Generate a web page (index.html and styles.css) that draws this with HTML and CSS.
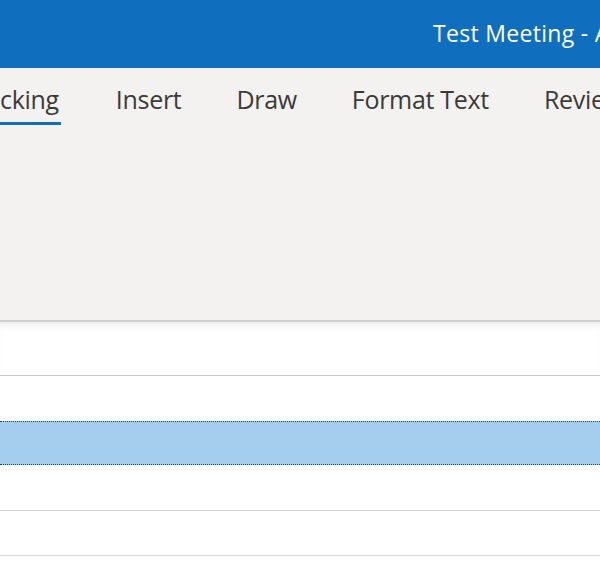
FILE: index.html
```html
<!DOCTYPE html>
<html>
<head>
<meta charset="utf-8">
<link rel="stylesheet" href="styles.css">
</head>
<body>
<div class="titlebar">
  <span class="title">Test Meeting - Appointment</span>
</div>
<div class="ribbon">
  <div class="tabs">
    <span class="tab tab-active">Tracking</span>
    <span class="tab">Insert</span>
    <span class="tab">Draw</span>
    <span class="tab">Format Text</span>
    <span class="tab">Review</span>
  </div>
</div>
<div class="rows">
  <div class="row row-first"></div>
  <div class="row row-plain"></div>
  <div class="row row-selected"></div>
  <div class="row row-after"></div>
  <div class="row row-last"></div>
</div>
</body>
</html>
```
FILE: styles.css
```css
html, body {
  margin: 0;
  padding: 0;
  width: 600px;
  height: 568px;
  overflow: hidden;
  background: #ffffff;
  font-family: "Open Sans", "Noto Sans", sans-serif;
}
.titlebar {
  height: 68px;
  background: #106ebe;
  display: flex;
  align-items: center;
  white-space: nowrap;
  overflow: hidden;
}
.title {
  margin-left: 433px;
  color: #ffffff;
  font-size: 23px;
  letter-spacing: 0.3px;
  padding-bottom: 3px;
}
.ribbon {
  height: 252px;
  background: #f3f2f1;
  border-bottom: 2px solid #d2d0ce;
  overflow: hidden;
}
.tabs {
  display: flex;
  align-items: flex-start;
  gap: 55px;
  white-space: nowrap;
  margin-left: -37px;
}
.tab {
  display: block;
  font-size: 25px;
  color: #3b3a39;
  letter-spacing: -0.3px;
  line-height: 30px;
  padding-top: 16px;
  padding-bottom: 11px;
}
.tab-active {
  border-bottom: 3px solid #106ebe;
  padding-bottom: 8px;
  padding-right: 2px;
}
.rows {
  display: flex;
  flex-direction: column;
}
.row {
  box-sizing: border-box;
}
.row-first {
  height: 54px;
  border-bottom: 1px solid #c8c8c8;
  box-shadow: inset 0 8px 8px -6px #e6e6e6;
}
.row-plain {
  height: 45px;
}
.row-selected {
  height: 44px;
  background: #a4cdee;
  border-top: 1px dotted #2c3e50;
  border-bottom: 1px dotted #2c3e50;
}
.row-after {
  height: 46px;
  border-bottom: 1px solid #d4d4d4;
}
.row-last {
  height: 45px;
  border-bottom: 1px solid #d4d4d4;
}
```
